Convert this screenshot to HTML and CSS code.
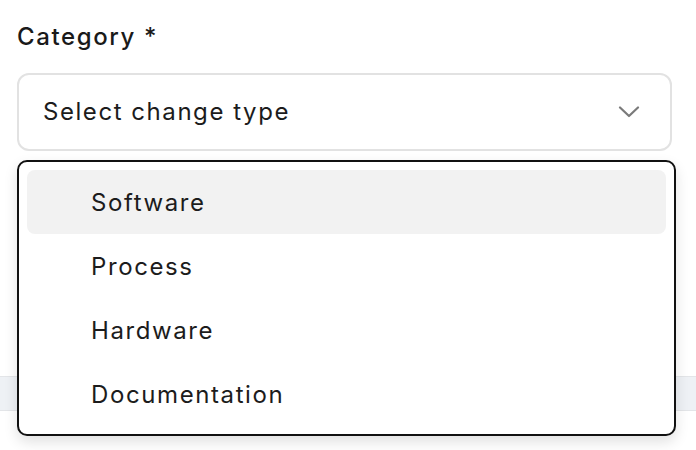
FILE: index.html
```html
<!DOCTYPE html>
<html>
<head>
<meta charset="utf-8">
<link rel="stylesheet" href="styles.css">
</head>
<body>
<div class="page">
  <div class="field">
    <label class="label">Category *</label>
    <div class="select">
      <span class="placeholder">Select change type</span>
      <svg class="chevron" width="22" height="12" viewBox="0 0 22 12"><path d="M2 1.5 L11 10 L20 1.5" fill="none" stroke="#7a7a7a" stroke-width="2.2" stroke-linecap="round" stroke-linejoin="round"/></svg>
    </div>
  </div>
  <div class="spacer"></div>
  <div class="bar"></div>
  <ul class="menu">
    <li class="item active">Software</li>
    <li class="item">Process</li>
    <li class="item">Hardware</li>
    <li class="item">Documentation</li>
  </ul>
</div>
</body>
</html>
```
FILE: styles.css
```css
* { box-sizing: border-box; }
html, body { margin: 0; padding: 0; background: #fff; }
body { font-family: Inter, "Noto Sans", sans-serif; color: #1c1c1c; }
.page { position: relative; width: 696px; height: 450px; overflow: hidden; }
.field { padding: 20px 24px 0 17px; display: flex; flex-direction: column; }
.label { font-size: 24px; font-weight: 500; letter-spacing: 1.6px; line-height: 34px; height: 34px; margin-bottom: 19px; color: #1a1a1a; }
.select { height: 78px; border: 2px solid #e2e2e2; border-radius: 12px; display: flex; align-items: center; justify-content: space-between; padding: 0 30px 0 24px; }
.placeholder { font-size: 24px; letter-spacing: 1.55px; line-height: 30px; color: #1c1c1c; }
.chevron { display: block; }
.spacer { height: 225px; }
.bar { height: 35px; background: #eef1f5; border-top: 1px solid #e3e5e8; border-bottom: 1px solid #e3e5e8; }
.menu { position: absolute; left: 17px; top: 160px; width: 659px; height: 276px; margin: 0; padding: 8px 8px; list-style: none; background: #fff; border: 2px solid #111; border-radius: 10px; box-shadow: 0 6px 14px rgba(0,0,0,0.12); }
.item { height: 64px; display: flex; align-items: center; padding-left: 64px; font-size: 24px; letter-spacing: 1.6px; color: #1c1c1c; border-radius: 8px; }
.item.active { background: #f2f2f2; }
```
